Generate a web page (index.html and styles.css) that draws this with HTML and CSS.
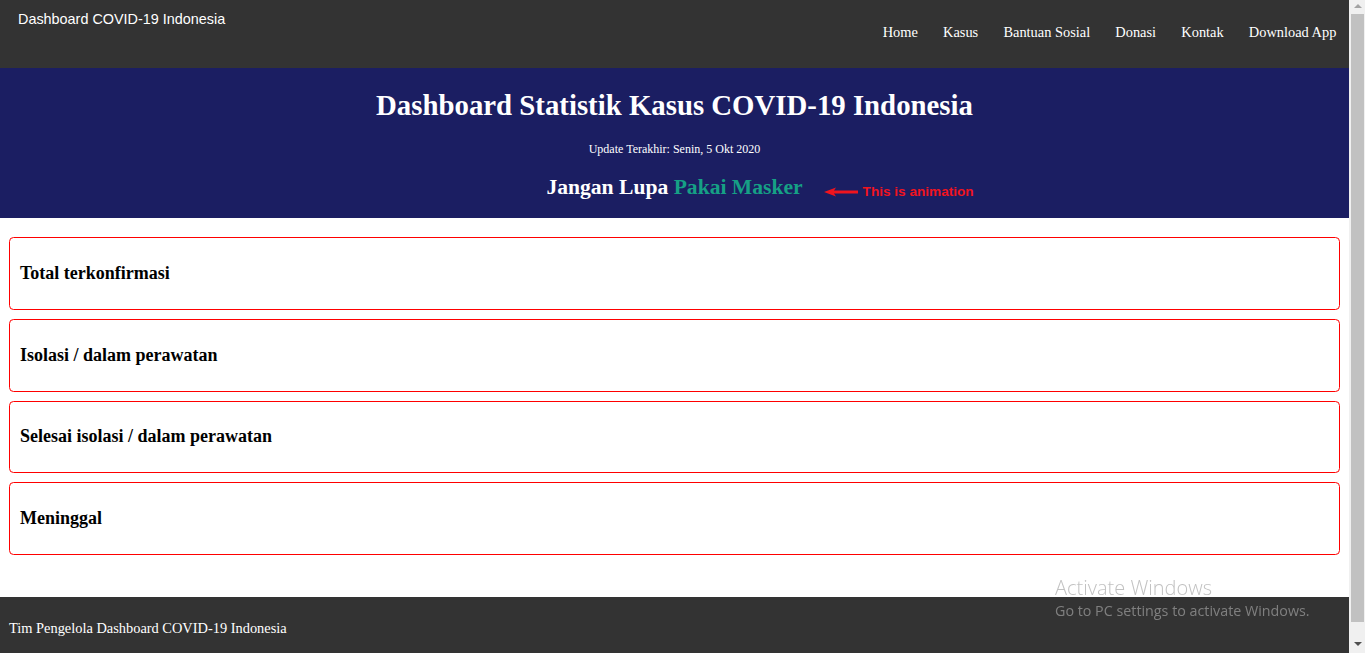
FILE: index.html
```html
<!DOCTYPE html>
<html lang="id">
<head>
<meta charset="utf-8">
<title>Dashboard COVID-19 Indonesia</title>
<link rel="stylesheet" href="styles.css">
</head>
<body>
<div class="page">
  <header class="topbar">
    <div class="brand">Dashboard COVID-19 Indonesia</div>
    <nav class="menu">
      <a href="#" class="menu-link">Home</a>
      <a href="#" class="menu-link">Kasus</a>
      <a href="#" class="menu-link">Bantuan Sosial</a>
      <a href="#" class="menu-link">Donasi</a>
      <a href="#" class="menu-link">Kontak</a>
      <a href="#" class="menu-link">Download App</a>
    </nav>
  </header>

  <section class="hero">
    <h1 class="hero-title">Dashboard Statistik Kasus COVID-19 Indonesia</h1>
    <p class="hero-update">Update Terakhir: Senin, 5 Okt 2020</p>
    <h2 class="hero-slogan"><span class="slogan-wrap">Jangan Lupa <span class="slogan-accent">Pakai Masker</span><span class="note"><svg class="note-arrow" width="34" height="10" viewBox="0 0 34 10"><path d="M0 5 L12 0.5 L10 3.5 L34 3.6 L34 6.4 L10 6.5 L12 9.5 Z" fill="#f0141e"/></svg><span class="note-text">This is animation</span></span></span></h2>
  </section>

  <main class="cards">
    <div class="card"><h3 class="card-title">Total terkonfirmasi</h3></div>
    <div class="card"><h3 class="card-title">Isolasi / dalam perawatan</h3></div>
    <div class="card"><h3 class="card-title">Selesai isolasi / dalam perawatan</h3></div>
    <div class="card"><h3 class="card-title">Meninggal</h3></div>
  </main>

  <footer class="footer">Tim Pengelola Dashboard COVID-19 Indonesia</footer>
</div>

<aside class="scrollbar" aria-hidden="true">
  <div class="sb-btn sb-up"><span class="sb-tri-up"></span></div>
  <div class="sb-track"><div class="sb-thumb"></div></div>
  <div class="sb-btn sb-down"><span class="sb-tri-down"></span></div>
</aside>

<div class="watermark">
  <div class="wm-title">Activate Windows</div>
  <div class="wm-sub">Go to PC settings to activate Windows.</div>
</div>
</body>
</html>
```

FILE: styles.css
```css
body {
  margin: 0;
  display: flex;
  align-items: flex-start;
  font-family: "Liberation Serif", "Times New Roman", serif;
  color: #000;
  background: #fff;
}
.page {
  flex: 1;
  min-width: 0;
}

/* browser scrollbar */
.scrollbar {
  position: sticky;
  top: 0;
  width: 16px;
  height: 100vh;
  flex-shrink: 0;
  background: #f0f0f0;
  display: flex;
  flex-direction: column;
}
.sb-btn {
  display: flex;
  justify-content: center;
  align-items: center;
  padding-left: 1px;
}
.sb-up {
  height: 14px;
}
.sb-down {
  height: 17px;
}
.sb-tri-up {
  width: 0;
  height: 0;
  border-left: 4px solid transparent;
  border-right: 4px solid transparent;
  border-bottom: 4px solid #a3a3a3;
  margin-top: -2px;
}
.sb-tri-down {
  width: 0;
  height: 0;
  border-left: 4px solid transparent;
  border-right: 4px solid transparent;
  border-top: 4px solid #505050;
  margin-top: -1px;
}
.sb-track {
  flex: 1;
  padding: 0 1px 0 2px;
}
.sb-thumb {
  height: 608px;
  background: #c1c1c1;
}

.topbar {
  display: flex;
  justify-content: space-between;
  align-items: flex-start;
  height: 68px;
  background: #333333;
  color: #fff;
}
.brand {
  font-family: "Liberation Sans", Arial, sans-serif;
  font-size: 14.4px;
  padding: 10.6px 0 0 18px;
}
.menu {
  display: flex;
  padding-top: 23.6px;
}
.menu-link {
  color: #fff;
  text-decoration: none;
  font-size: 14.4px;
  padding: 0 12.6px;
}

.hero {
  background: #1b1e62;
  color: #fff;
  text-align: center;
  padding: 21.3px 0 18.4px;
}
.hero-title {
  margin: 0 0 19.4px;
  font-size: 28.8px;
  font-weight: bold;
}
.hero-update {
  margin: 0 0 18.2px;
  font-size: 12px;
}
.hero-slogan {
  margin: 0;
  font-size: 21.6px;
  font-weight: bold;
}
.slogan-wrap {
  position: relative;
}
.slogan-accent {
  color: #16a085;
}
.note {
  position: absolute;
  left: calc(100% + 21px);
  top: 9.5px;
  display: flex;
  align-items: center;
  gap: 5px;
  white-space: nowrap;
}
.note-arrow {
  display: block;
}
.note-text {
  font-family: "Liberation Sans", Arial, sans-serif;
  font-weight: bold;
  font-size: 13.6px;
  color: #f0141e;
}

.cards {
  display: flex;
  flex-direction: column;
  gap: 9.07px;
  padding: 19px 9px 0;
}
.card {
  height: 72.6px;
  box-sizing: border-box;
  border: 1px solid #ff0000;
  border-radius: 4.5px;
  display: flex;
  align-items: center;
  padding: 0 10px;
}
.card-title {
  margin: 0;
  font-size: 18px;
  font-weight: bold;
}

.footer {
  margin-top: 42.4px;
  background: #333333;
  color: #fff;
  font-size: 14.4px;
  padding: 22.9px 9px;
}

.watermark {
  position: fixed;
  left: 1055px;
  top: 576px;
  font-family: "Open Sans", "Noto Sans", sans-serif;
  color: rgba(163, 163, 163, 0.68);
  pointer-events: none;
}
.wm-title {
  font-size: 20px;
  font-weight: 300;
  line-height: 24.5px;
}
.wm-sub {
  font-size: 14.3px;
  line-height: 20px;
}
```
